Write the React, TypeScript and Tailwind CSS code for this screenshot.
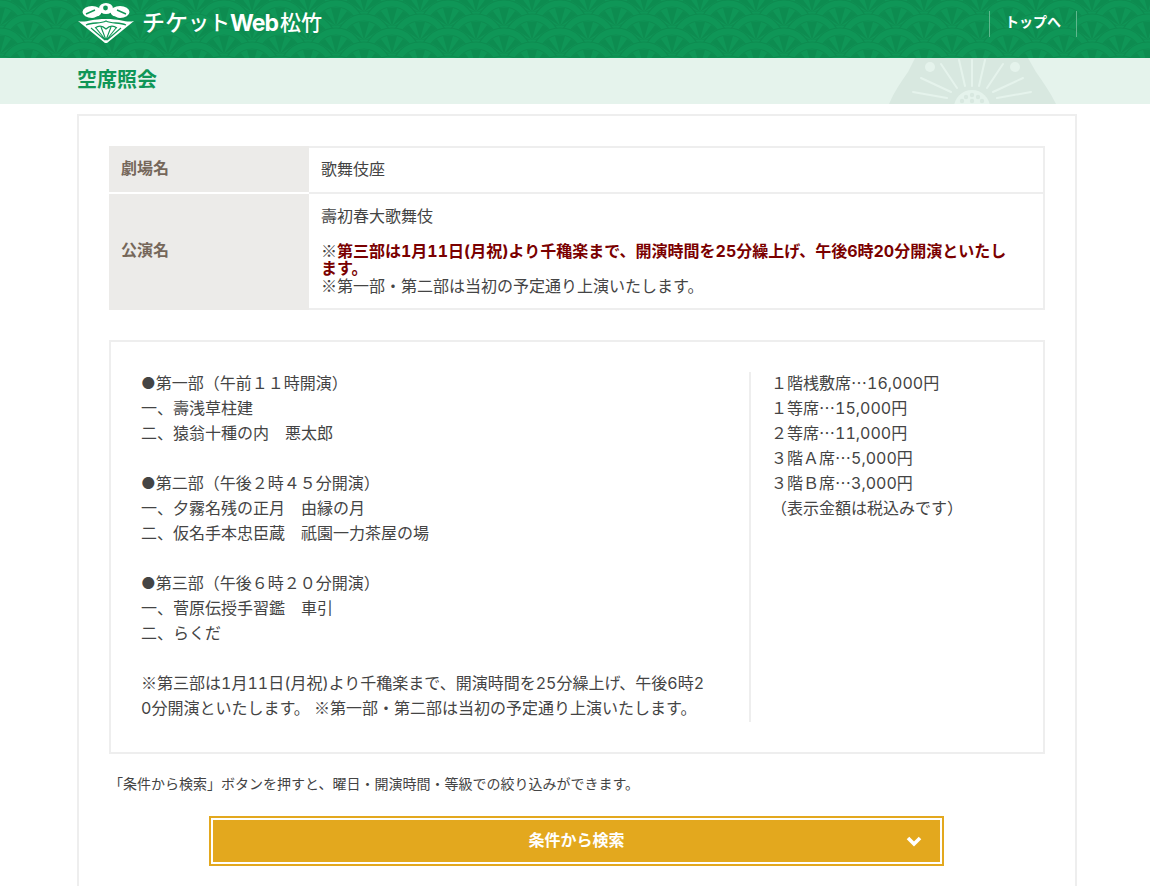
const font = { fontFamily: 'Inter, "Noto Sans CJK JP", "Liberation Sans", sans-serif' };

const programLines = [
  '●第一部（午前１１時開演）',
  '一、壽浅草柱建',
  '二、猿翁十種の内　悪太郎',
  '',
  '●第二部（午後２時４５分開演）',
  '一、夕霧名残の正月　由縁の月',
  '二、仮名手本忠臣蔵　祇園一力茶屋の場',
  '',
  '●第三部（午後６時２０分開演）',
  '一、菅原伝授手習鑑　車引',
  '二、らくだ',
  '',
  '※第三部は1月11日(月祝)より千穐楽まで、開演時間を25分繰上げ、午後6時2',
  '0分開演といたします。 ※第一部・第二部は当初の予定通り上演いたします。',
];

const priceLines = [
  '１階桟敷席…16,000円',
  '１等席…15,000円',
  '２等席…11,000円',
  '３階Ａ席…5,000円',
  '３階Ｂ席…3,000円',
  '（表示金額は税込みです）',
];

// Inter draws ※ and … too small, these two come from the CJK font
function Jp({ text }: { text: string }) {
  return (
    <>
      {text.split(/([※…])/).map((part, i) =>
        part === '※' || part === '…' ? (
          <span key={i} className="font-['Noto_Sans_CJK_JP'] leading-none">{part}</span>
        ) : (
          part
        ),
      )}
    </>
  );
}

function HeaderPattern() {
  const rows = [0, 14, 28, 42, 56];
  return (
    <svg className="absolute inset-0 h-full w-full" aria-hidden="true">
      <defs>
        <g id="scale">
          <circle r="28" fill="#0f9657" stroke="#0d8c50" strokeWidth="1.2" />
          <path d="M-21 0 A21 21 0 0 1 21 0" fill="none" stroke="#0d8c50" strokeWidth="1.2" />
          <path d="M0 -2 L-17 -13 L-11 -17 Z M0 -2 L-5 -20 L5 -20 Z M0 -2 L17 -13 L11 -17 Z M0 -2 L-20 -4 L-19 -8 Z M0 -2 L20 -4 L19 -8 Z" fill="#0d8c50" />
        </g>
        <pattern id="seigaiha" width="56" height="28" patternUnits="userSpaceOnUse">
          {rows.map((cy, i) =>
            i % 2 === 0 ? (
              <g key={cy}>
                <use href="#scale" x="0" y={cy} />
                <use href="#scale" x="56" y={cy} />
              </g>
            ) : (
              <use key={cy} href="#scale" x="28" y={cy} />
            ),
          )}
        </pattern>
      </defs>
      <rect width="100%" height="100%" fill="url(#seigaiha)" />
    </svg>
  );
}

function FanLogo() {
  return (
    <svg className="mt-[3px]" width="56" height="41" viewBox="0 0 56 41" aria-hidden="true">
      <path d="M0 18 C8 20 12 16 28 16 C44 16 48 20 56 18 L29 40 L27 40 Z" fill="#fff" />
      <path d="M8 22 C15 19 22 21 28 18 C34 21 41 19 48 22" fill="none" stroke="#0f9657" strokeWidth="1.3" />
      <path d="M13 25 L27 37 M18 25 L27.5 37 M23 24 L28 37 M33 24 L28 37 M38 25 L28.5 37 M43 25 L29 37" stroke="#0f9657" strokeWidth="1.1" fill="none" />
      <path d="M17 25 C21 22 25 23 28 26 C31 23 35 22 39 25" fill="none" stroke="#0f9657" strokeWidth="1.2" />
      <ellipse cx="14" cy="9" rx="9.5" ry="6" fill="#fff" />
      <ellipse cx="42" cy="9" rx="9.5" ry="6" fill="#fff" />
      <ellipse cx="28" cy="5.5" rx="7" ry="5.5" fill="#fff" />
      <circle cx="27.5" cy="5" r="2.4" fill="#0f9657" />
      <path d="M8 11 L17 7 M48 11 L39 7" stroke="#0f9657" strokeWidth="1.4" />
      <path d="M17 15.5 C22 12 34 12 39 15.5" stroke="#0f9657" strokeWidth="2" fill="none" />
    </svg>
  );
}

function CrestWatermark() {
  return (
    <svg className="absolute left-[889px] top-0" width="170" height="46" viewBox="0 0 170 46" aria-hidden="true">
      <path d="M0 46 C5 34 12 24 19 14 L26 0 L139 0 L147 14 C154 24 161 34 167 46 Z" fill="#d8e8e0" />
      <circle cx="41" cy="9" r="5" fill="#e5f3ec" />
      <circle cx="126" cy="9" r="5" fill="#e5f3ec" />
      <g stroke="#e5f3ec" strokeWidth="2" strokeLinecap="round">
        <path d="M83 28 L83 2 M76 28 L70 2 M90 28 L96 2 M68 30 L52 6 M98 30 L114 6 M62 34 L32 20 M104 34 L134 20 M58 40 L24 34 M108 40 L142 34" />
      </g>
      <circle cx="83" cy="50" r="18" fill="#e5f3ec" />
      <g fill="#d8e8e0">
        <circle cx="83" cy="37" r="2.2" />
        <circle cx="77" cy="39" r="2.2" />
        <circle cx="89" cy="39" r="2.2" />
        <circle cx="83" cy="43" r="2.2" />
        <circle cx="73" cy="43" r="2.2" />
        <circle cx="93" cy="43" r="2.2" />
      </g>
    </svg>
  );
}

export default function App() {
  return (
    <div className="h-[886px] overflow-hidden bg-white text-[#444] tabular-nums" style={font}>
      <header className="relative h-[58px] overflow-hidden bg-[#0f9657]">
        <HeaderPattern />
        <div className="relative ml-[77px] flex h-full w-[1000px] items-start justify-between">
          <div className="flex items-start gap-[8px]">
            <div className="ml-px">
              <FanLogo />
            </div>
            <div className="flex h-[46px] items-center font-medium text-white">
              <span className="text-[23px]">チケ</span>
              <span className="text-[21px]">ット</span>
              <span className="w-[50px] text-[23px] font-bold tracking-[-1px]">Web</span>
              <span className="text-[21px]">松竹</span>
            </div>
          </div>
          <a className="mt-[11px] flex h-[26px] w-[88px] items-center justify-center border-x border-[#5fb88d] pb-1 text-sm font-bold text-white">
            トップへ
          </a>
        </div>
      </header>

      <div className="relative h-[46px] overflow-hidden bg-[#e5f3ec]">
        <CrestWatermark />
        <h1 className="relative ml-[77px] text-xl font-bold leading-[44px] text-[#0f9657]">空席照会</h1>
      </div>

      <main className="ml-[77px] mt-[10px] w-[1000px] border-2 border-[#eeeeee] px-[30px] pt-[30px] pb-10">
        <table className="w-[936px] border-separate border-spacing-0 text-base">
          <tbody>
            <tr>
              <th className="h-[48px] w-[200px] border-b-2 border-white bg-[#ecebe9] px-3 pb-[2px] text-left font-bold text-[#75675a]">劇場名</th>
              <td className="border-y-2 border-r-2 border-[#eeeeee] px-3 pb-[2px]">歌舞伎座</td>
            </tr>
            <tr>
              <th className="bg-[#ecebe9] px-3 pb-1 text-left font-bold text-[#75675a]">公演名</th>
              <td className="h-[116px] border-r-2 border-b-2 border-[#eeeeee] px-3 align-top pt-[10px] leading-[25px]">
                <p>壽初春大歌舞伎</p>
                <p className="mt-[13px] pr-4 leading-[17px]">
                  <Jp text="※" />
                  <span className="font-bold text-[#7a0000]">第三部は1月11日(月祝)より千穐楽まで、開演時間を25分繰上げ、午後6時20分開演といたします。</span>
                </p>
                <p className="leading-[17px]"><Jp text="※第一部・第二部は当初の予定通り上演いたします。" /></p>
              </td>
            </tr>
          </tbody>
        </table>

        <section className="mt-[30px] flex w-[936px] border-2 border-[#eeeeee] p-[30px] text-base leading-[25px]">
          <div className="w-[610px] shrink-0 border-r-2 border-[#eeeeee] pr-[30px]">
            <div className="-mt-px pb-px whitespace-nowrap">
              {programLines.map((line, i) => (
                <p key={i} className="min-h-[25px]"><Jp text={line} /></p>
              ))}
            </div>
          </div>
          <div className="pl-[20px]">
            <div className="-mt-px">
              {priceLines.map((line) => (
                <p key={line}><Jp text={line} /></p>
              ))}
            </div>
          </div>
        </section>

        <p className="mt-5 text-sm leading-5">「条件から検索」ボタンを押すと、曜日・開演時間・等級での絞り込みができます。</p>

        <button className="relative ml-[100px] mt-[22px] flex h-[50px] w-[735px] items-center justify-center border-2 border-[#e3a81e] bg-[#e3a81e] pb-[2px] font-bold text-white outline-2 -outline-offset-4 outline-white">
          条件から検索
          <svg className="absolute right-[20px] top-[17px]" width="16" height="12" viewBox="0 0 16 12" aria-hidden="true">
            <path d="M2 3 L8 9 L14 3" fill="none" stroke="#fff" strokeWidth="3.6" />
          </svg>
        </button>
      </main>
    </div>
  );
}
